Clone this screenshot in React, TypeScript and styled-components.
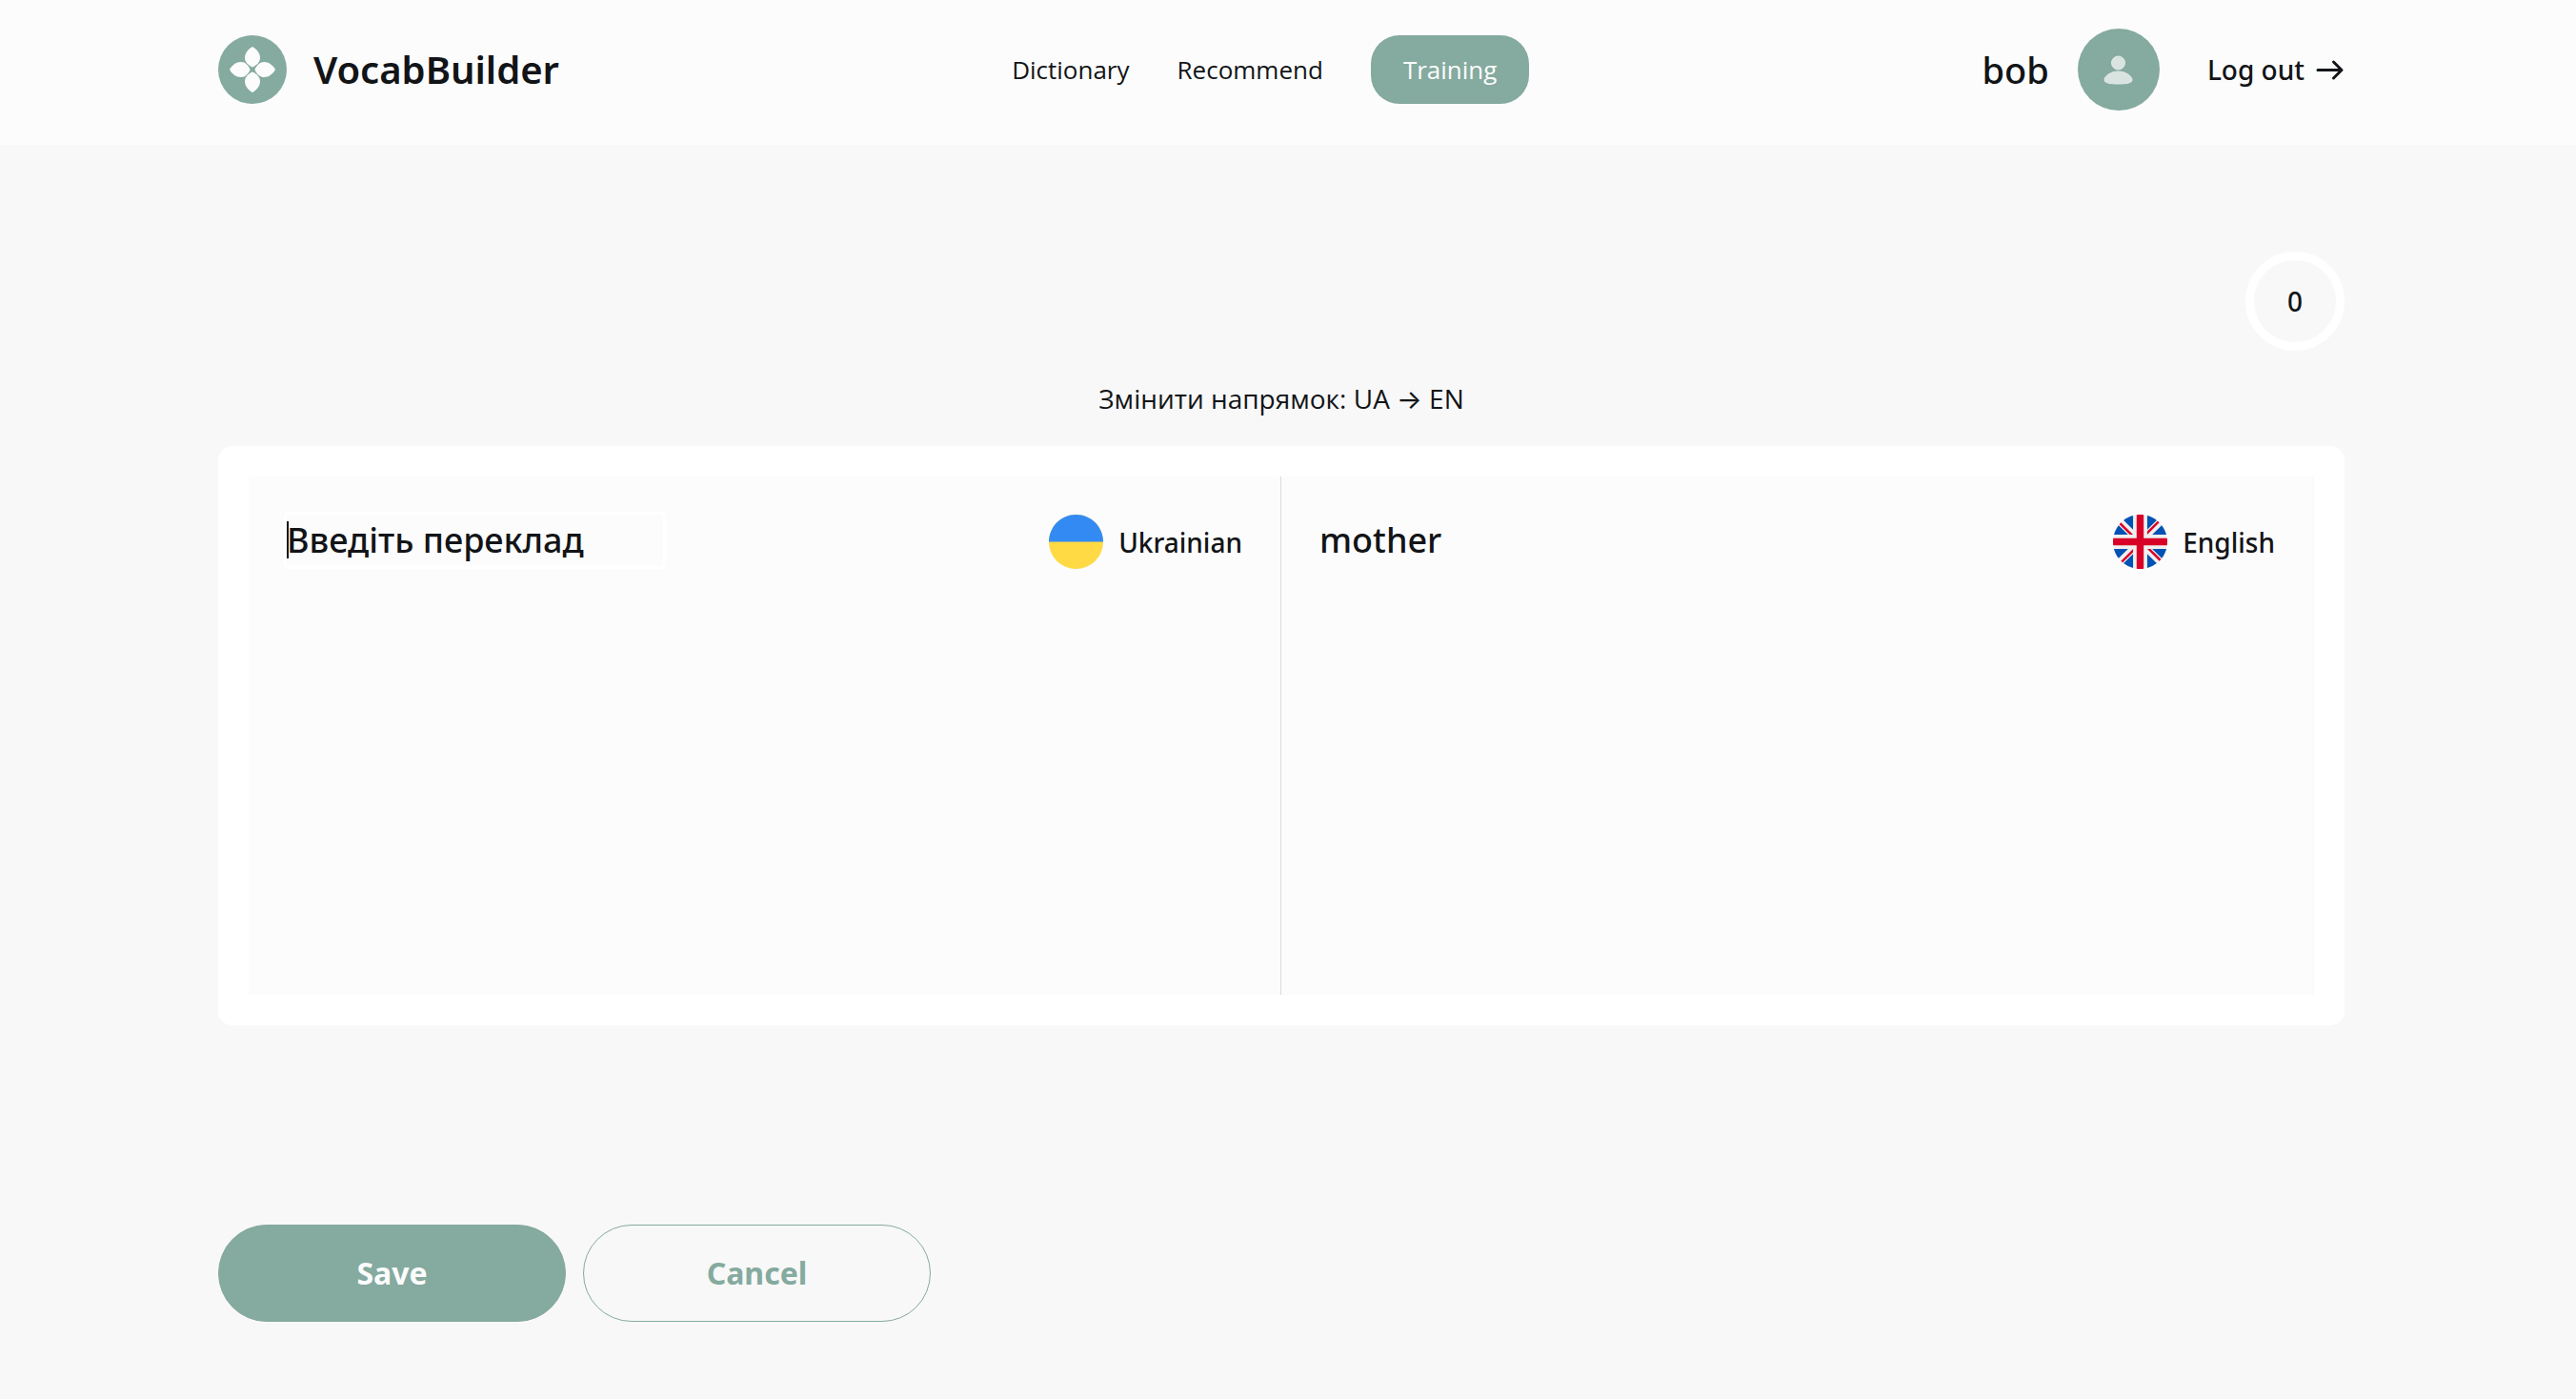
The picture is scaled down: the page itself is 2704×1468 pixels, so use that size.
import React, { useState } from "react";
import styled, { createGlobalStyle } from "styled-components";

const GlobalStyle = createGlobalStyle`
  *, *::before, *::after { box-sizing: border-box; }
  body {
    margin: 0;
    background: #f8f8f8;
    color: #121417;
    font-family: "Noto Sans", "Open Sans", sans-serif;
    font-size: 28px;
  }
  button, input { font-family: inherit; color: inherit; }
  p { margin: 0; }
`;

const Header = styled.header`
  display: flex;
  align-items: center;
  justify-content: space-between;
  padding: 30px 243px 36px 229px;
  background: #fcfcfc;
`;

const Brand = styled.a`
  display: flex;
  align-items: center;
  gap: 28px;
  color: inherit;
  text-decoration: none;
  font-size: 40px;
  line-height: 46px;
  font-weight: 600;
`;

const Nav = styled.nav`
  display: flex;
  align-items: center;
  gap: 50px;
  font-family: "Open Sans", "Noto Sans", sans-serif;
`;

const NavLink = styled.a<{ $active?: boolean }>`
  padding: ${(p) => (p.$active ? "18px 34px" : "0")};
  border-radius: 30px;
  background: ${(p) => (p.$active ? "#85aa9f" : "transparent")};
  color: ${(p) => (p.$active ? "#fcfcfc" : "#121417")};
  font-size: 26px;
  line-height: 36px;
  text-decoration: none;
`;

const UserBar = styled.div`
  display: flex;
  align-items: center;
  gap: 50px;
`;

const User = styled.div`
  display: flex;
  align-items: center;
  gap: 30px;
  font-size: 38px;
  line-height: 46px;
  font-weight: 500;
`;

const Avatar = styled.span`
  display: grid;
  place-items: center;
  width: 86px;
  height: 86px;
  border-radius: 50%;
  background: #85aa9f;
`;

const LogOut = styled.button`
  display: flex;
  align-items: center;
  gap: 10px;
  padding: 0;
  border: 0;
  background: none;
  font-size: 28px;
  line-height: 36px;
  font-weight: 500;
`;

const Main = styled.main`
  display: flex;
  flex-direction: column;
  padding: 112px 243px 78px 229px;
`;

const Progress = styled.div`
  display: grid;
  place-items: center;
  align-self: flex-end;
  width: 104px;
  height: 104px;
  border: 9px solid #ffffff;
  border-radius: 50%;
  font-size: 28px;
  line-height: 36px;
  font-weight: 500;
`;

const Direction = styled.button`
  align-self: center;
  margin: 29px 0;
  padding: 0;
  border: 0;
  background: none;
  font-family: "Open Sans", Inter, sans-serif;
  font-size: 28px;
  line-height: 42px;
`;

const Card = styled.section`
  display: grid;
  grid-template-columns: 1fr 1fr;
  padding: 32px;
  border-radius: 15px;
  background: #ffffff;
`;

const Panel = styled.div<{ $divided?: boolean }>`
  display: flex;
  align-items: flex-start;
  justify-content: space-between;
  min-height: 544px;
  padding: 40px;
  border-right: 1px solid ${(p) => (p.$divided ? "#dbdbdb" : "#f8f8f8")};
  background: #fcfcfc;
`;

const Field = styled.div`
  position: relative;
  width: 395px;

  &::before {
    content: "";
    position: absolute;
    left: 0;
    top: 7px;
    width: 2px;
    height: 39px;
    background: #121417;
  }
`;

const WordInput = styled.input`
  display: block;
  width: 100%;
  height: 54px;
  padding: 0 0 2px;
  border: 0;
  border-radius: 2px;
  outline: 3px solid #ffffff;
  background: transparent;
  font-size: 36px;
  font-weight: 500;
  caret-color: transparent;

  &::placeholder { color: #121417; opacity: 1; }
`;

const Word = styled.p`
  font-size: 36px;
  line-height: 54px;
  font-weight: 500;
`;

const Language = styled.label`
  display: flex;
  align-items: center;
  gap: 16px;
  font-size: 28px;
  line-height: 36px;
  font-weight: 500;
`;

const Actions = styled.div`
  display: flex;
  gap: 18px;
  margin-top: 209px;
`;

const ActionButton = styled.button<{ $outlined?: boolean }>`
  width: 365px;
  height: 102px;
  border: 1px solid #85aa9f;
  border-radius: 51px;
  background: ${(p) => (p.$outlined ? "transparent" : "#85aa9f")};
  color: ${(p) => (p.$outlined ? "#85aa9f" : "#fcfcfc")};
  font-size: 32px;
  line-height: 46px;
  font-weight: 700;
`;

const petal = "M36 12C40.5 14.6 44 19 44 23.6C44 28.3 40.6 31 37.4 33Q36 33.8 34.6 33C31.4 31 28 28.3 28 23.6C28 19 31.5 14.6 36 12Z";

function Logo() {
  return (
    <svg width="72" height="72" viewBox="0 0 72 72" aria-hidden="true">
      <circle cx="36" cy="36" r="36" fill="#85aa9f" />
      {[0, 90, 180, 270].map((angle) => (
        <path key={angle} d={petal} fill="#fcfcfc" transform={`rotate(${angle} 36 36)`} />
      ))}
    </svg>
  );
}

function UserIcon() {
  return (
    <svg width="32" height="32" viewBox="0 0 32 32" fill="#d9e3e0" stroke="#e3ebe9" aria-hidden="true">
      <circle cx="15.5" cy="9" r="7" />
      <path d="M15.5 18C23 18 30 22.5 30 27C30 30 24 31 15.5 31C7 31 1 30 1 27C1 22.5 8 18 15.5 18Z" />
    </svg>
  );
}

function ArrowRight() {
  return (
    <svg width="32" height="32" viewBox="0 0 32 32" fill="none" stroke="#121417" strokeWidth="3" strokeLinecap="round" strokeLinejoin="round" aria-hidden="true">
      <path d="M4 16.5H29M20.5 8L29 16.5L20.5 25" />
    </svg>
  );
}

function UkraineFlag() {
  return (
    <svg width="57" height="57" viewBox="0 0 512 512" aria-hidden="true">
      <circle cx="256" cy="256" r="256" fill="#ffda44" />
      <path d="M0 256C0 114.6 114.6 0 256 0S512 114.6 512 256" fill="#338af3" />
    </svg>
  );
}

function BritainFlag() {
  return (
    <svg width="57" height="57" viewBox="0 0 512 512" aria-hidden="true">
      <circle cx="256" cy="256" r="256" fill="#f0f0f0" />
      <g fill="#0052b4">
        <path d="M52.92 100.142c-20.109 26.163-35.272 56.318-44.101 89.077h133.178z" />
        <path d="M503.181 189.219c-8.829-32.758-23.993-62.913-44.101-89.076l-89.075 89.076z" />
        <path d="M8.819 322.784c8.83 32.758 23.993 62.913 44.101 89.075l89.074-89.075z" />
        <path d="M411.858 52.921c-26.163-20.109-56.317-35.272-89.076-44.102v133.177z" />
        <path d="M100.142 459.079c26.163 20.109 56.318 35.272 89.076 44.102V370.005z" />
        <path d="M189.217 8.819c-32.758 8.83-62.913 23.993-89.075 44.101l89.075 89.075z" />
        <path d="M322.783 503.181c32.758-8.83 62.913-23.993 89.075-44.101l-89.075-89.075z" />
        <path d="M370.005 322.784l89.075 89.076c20.108-26.162 35.272-56.318 44.101-89.076z" />
      </g>
      <g fill="#d80027">
        <path d="M509.833 222.609H289.392V2.167C278.461.744 267.317 0 256 0c-11.319 0-22.461.744-33.391 2.167v220.441H2.167C.744 233.539 0 244.683 0 256c0 11.319.744 22.461 2.167 33.391h220.441v220.442C233.539 511.256 244.681 512 256 512c11.317 0 22.461-.743 33.391-2.167V289.392h220.442C511.256 278.461 512 267.319 512 256c0-11.317-.744-22.461-2.167-33.391z" />
        <path d="M322.783 322.784L437.019 437.02c5.254-5.252 10.266-10.743 15.048-16.435l-97.802-97.802z" />
        <path d="M189.217 322.784L74.98 437.019c5.252 5.254 10.743 10.266 16.435 15.048l97.802-97.804z" />
        <path d="M189.217 189.219L74.981 74.98c-5.254 5.252-10.266 10.743-15.048 16.435l97.803 97.803z" />
        <path d="M322.783 189.219L437.02 74.981c-5.252-5.254-10.743-10.266-16.435-15.047l-97.802 97.803z" />
      </g>
    </svg>
  );
}

export default function App() {
  const [answer, setAnswer] = useState("");

  return (
    <>
      <GlobalStyle />
      <Header>
        <Brand href="#home">
          <Logo />
          <span>VocabBuilder</span>
        </Brand>
        <Nav>
          <NavLink href="#dictionary">Dictionary</NavLink>
          <NavLink href="#recommend">Recommend</NavLink>
          <NavLink href="#training" $active aria-current="page">Training</NavLink>
        </Nav>
        <UserBar>
          <User>
            <span>bob</span>
            <Avatar><UserIcon /></Avatar>
          </User>
          <LogOut type="button">
            <span>Log out</span>
            <ArrowRight />
          </LogOut>
        </UserBar>
      </Header>
      <Main>
        <Progress>0</Progress>
        <Direction type="button">Змінити напрямок: UA → EN</Direction>
        <Card>
          <Panel $divided>
            <Field>
              <WordInput
                id="answer"
                type="text"
                placeholder="Введіть переклад"
                value={answer}
                onChange={(e) => setAnswer(e.target.value)}
              />
            </Field>
            <Language htmlFor="answer">
              <UkraineFlag />
              <span>Ukrainian</span>
            </Language>
          </Panel>
          <Panel>
            <Word>mother</Word>
            <Language as="div">
              <BritainFlag />
              <span>English</span>
            </Language>
          </Panel>
        </Card>
        <Actions>
          <ActionButton type="button">Save</ActionButton>
          <ActionButton type="button" $outlined>Cancel</ActionButton>
        </Actions>
      </Main>
    </>
  );
}
